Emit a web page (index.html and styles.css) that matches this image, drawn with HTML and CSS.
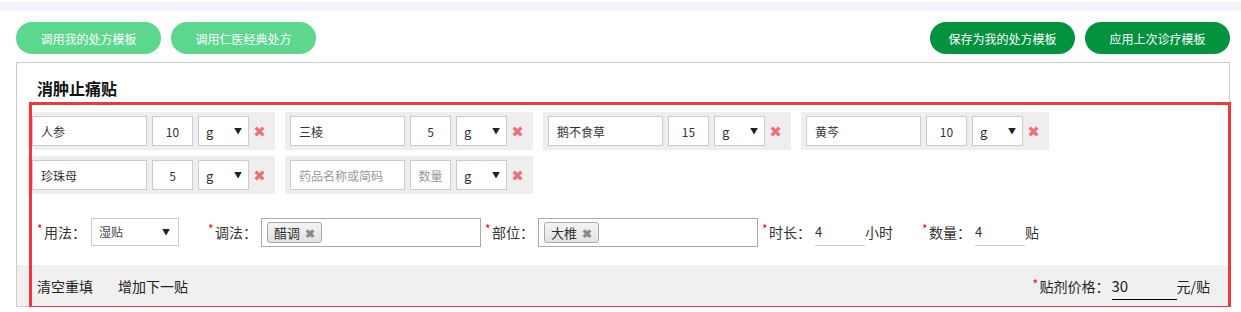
FILE: index.html
```html
<!DOCTYPE html>
<html lang="zh-CN">
<head>
  <meta charset="UTF-8">
  <meta name="viewport" content="width=device-width, initial-scale=1.0">
  <title>外用贴剂处方</title>
  <link rel="stylesheet" href="styles.css">
</head>
<body>
  <div class="top-strip"></div>

  <div class="page">
    <div class="toolbar">
      <div class="btn-group">
        <button class="btn btn-light">调用我的处方模板</button>
        <button class="btn btn-light">调用仁医经典处方</button>
      </div>
      <div class="btn-group">
        <button class="btn btn-dark">保存为我的处方模板</button>
        <button class="btn btn-dark">应用上次诊疗模板</button>
      </div>
    </div>

    <div class="panel">
      <h3 class="panel-title">消肿止痛贴</h3>

      <!-- herb rows -->
      <div class="herb-list">
        <div class="herb">
          <input class="herb-name" type="text" value="人参">
          <input class="herb-qty" type="text" value="10">
          <div class="unit-select">g<span class="caret">&#9660;</span></div>
          <svg class="herb-del" viewBox="0 0 10 10"><path d="M1.5 1.5L8.5 8.5M8.5 1.5L1.5 8.5"/></svg>
        </div>
        <div class="herb">
          <input class="herb-name" type="text" value="三棱">
          <input class="herb-qty" type="text" value="5">
          <div class="unit-select">g<span class="caret">&#9660;</span></div>
          <svg class="herb-del" viewBox="0 0 10 10"><path d="M1.5 1.5L8.5 8.5M8.5 1.5L1.5 8.5"/></svg>
        </div>
        <div class="herb">
          <input class="herb-name" type="text" value="鹅不食草">
          <input class="herb-qty" type="text" value="15">
          <div class="unit-select">g<span class="caret">&#9660;</span></div>
          <svg class="herb-del" viewBox="0 0 10 10"><path d="M1.5 1.5L8.5 8.5M8.5 1.5L1.5 8.5"/></svg>
        </div>
        <div class="herb">
          <input class="herb-name" type="text" value="黄芩">
          <input class="herb-qty" type="text" value="10">
          <div class="unit-select">g<span class="caret">&#9660;</span></div>
          <svg class="herb-del" viewBox="0 0 10 10"><path d="M1.5 1.5L8.5 8.5M8.5 1.5L1.5 8.5"/></svg>
        </div>
        <div class="herb">
          <input class="herb-name" type="text" value="珍珠母">
          <input class="herb-qty" type="text" value="5">
          <div class="unit-select">g<span class="caret">&#9660;</span></div>
          <svg class="herb-del" viewBox="0 0 10 10"><path d="M1.5 1.5L8.5 8.5M8.5 1.5L1.5 8.5"/></svg>
        </div>
        <div class="herb">
          <input class="herb-name" type="text" placeholder="药品名称或简码">
          <input class="herb-qty" type="text" placeholder="数量">
          <div class="unit-select">g<span class="caret">&#9660;</span></div>
          <svg class="herb-del" viewBox="0 0 10 10"><path d="M1.5 1.5L8.5 8.5M8.5 1.5L1.5 8.5"/></svg>
        </div>
      </div>

      <!-- usage -->
      <div class="usage-row">
        <span class="req">*</span><span class="label">用法：</span>
        <div class="usage-select">湿贴<span class="caret">&#9660;</span></div>

        <span class="req gap-wide">*</span><span class="label">调法：</span>
        <div class="tag-box">
          <span class="tag">醋调<span class="tag-x">&#10006;</span></span>
        </div>

        <span class="req gap-narrow">*</span><span class="label">部位：</span>
        <div class="tag-box">
          <span class="tag">大椎<span class="tag-x">&#10006;</span></span>
        </div>

        <span class="req gap-narrow">*</span><span class="label">时长：</span>
        <input class="line-input" type="text" value="4">
        <span class="unit">小时</span>

        <span class="req gap-wide">*</span><span class="label">数量：</span>
        <input class="line-input" type="text" value="4">
        <span class="unit">贴</span>
      </div>

      <div class="panel-footer">
        <a class="footer-link">清空重填</a>
        <a class="footer-link">增加下一贴</a>
        <div class="price">
          <span class="req">*</span><span class="label">贴剂价格：</span>
          <input class="price-input" type="text" value="30">
          <span class="unit">元/贴</span>
        </div>
      </div>

      <div class="highlight"></div>
    </div>
  </div>
</body>
</html>
```

FILE: styles.css
```css
body {
  margin: 0;
  font-family: "Noto Sans CJK SC", "Microsoft YaHei", sans-serif;
  color: #333;
  background: #fff;
}
input {
  font-family: inherit;
  color: #333;
  outline: none;
  box-sizing: border-box;
}
input::placeholder {
  color: #999;
}
.top-strip {
  height: 9px;
  margin-top: 2px;
  background: #f3f4f8;
}
.page {
  padding: 0 11px 0 16px;
}
.toolbar {
  display: flex;
  justify-content: space-between;
  margin-top: 11px;
}
.btn-group {
  display: flex;
  gap: 10px;
}
.btn {
  width: 145px;
  height: 32px;
  border: none;
  border-radius: 16px;
  color: #fff;
  font-family: inherit;
  font-size: 12px;
  padding: 0;
}
.btn-light {
  background: #5bd88e;
}
.btn-dark {
  background: #03933f;
}
.panel {
  position: relative;
  margin-top: 8px;
  border: 1px solid #ccc;
}
.panel-title {
  margin: 0;
  padding: 15px 20px 0;
  font-size: 16px;
  line-height: 20px;
  font-weight: bold;
  color: #111;
}
.herb-list {
  display: flex;
  flex-wrap: wrap;
  margin-top: 14px;
  padding-left: 10px;
}
.herb {
  display: flex;
  align-items: center;
  width: 248px;
  height: 38px;
  box-sizing: border-box;
  padding-left: 5px;
  margin: 0 10px 6px 0;
  background: #eee;
}
.herb-name,
.herb-qty {
  height: 30px;
  border: 1px solid #ccc;
  font-size: 12px;
  background: #fff;
}
.herb-name {
  width: 115px;
  padding: 0 8px;
}
.herb-qty {
  width: 41px;
  margin-left: 5px;
  padding: 0;
  text-align: center;
}
.unit-select {
  position: relative;
  width: 51px;
  height: 30px;
  margin-left: 5px;
  box-sizing: border-box;
  border: 1px solid #ccc;
  background: #fff;
  padding-left: 7px;
  font-size: 13px;
  line-height: 30px;
}
.caret {
  position: absolute;
  right: 6px;
  top: 0;
  font-size: 8px;
  line-height: 27px;
  color: #222;
}
.herb-del {
  width: 11px;
  height: 11px;
  margin-left: 5px;
  stroke: #ee6f77;
  stroke-width: 3;
  fill: none;
}
.usage-row {
  display: flex;
  align-items: center;
  height: 30px;
  margin-top: 17px;
  padding-left: 20px;
  font-size: 14px;
}
.req {
  align-self: flex-start;
  width: 7px;
  margin-top: 6px;
  font-size: 12px;
  line-height: 12px;
  color: #f00;
}
.gap-wide {
  margin-left: 29px;
}
.gap-narrow {
  margin-left: 4px;
}
.label {
  line-height: 20px;
}
.usage-select {
  position: relative;
  width: 88px;
  height: 28px;
  margin-left: 5px;
  box-sizing: border-box;
  border: 1px solid #ccc;
  padding-left: 7px;
  font-size: 12px;
  line-height: 26px;
  color: #444;
}
.usage-select .caret {
  right: 8px;
  line-height: 25px;
}
.tag-box {
  display: flex;
  align-items: center;
  width: 220px;
  height: 29px;
  margin-left: 4px;
  box-sizing: border-box;
  border: 1px solid #aaa;
  padding-left: 5px;
}
.tag {
  display: flex;
  align-items: center;
  height: 21px;
  box-sizing: border-box;
  padding: 0 6px;
  border: 1px solid #aaa;
  border-radius: 3px;
  background: linear-gradient(#f4f4f4, #e2e2e2);
  font-size: 13px;
  color: #333;
}
.tag-x {
  margin-left: 5px;
  font-size: 12px;
  font-weight: bold;
  color: #888;
}
.line-input {
  width: 50px;
  height: 28px;
  margin-left: 4px;
  border: none;
  border-bottom: 1px solid #ccc;
  padding: 0;
  font-size: 13px;
}
.unit {
  line-height: 20px;
}
.panel-footer {
  display: flex;
  align-items: center;
  height: 41px;
  margin-top: 18px;
  padding: 0 19px 0 20px;
  background: #f0f0f0;
  font-size: 14px;
}
.footer-link {
  margin-right: 25px;
  color: #222;
  cursor: pointer;
}
.price {
  display: flex;
  align-items: center;
  height: 30px;
  margin-left: auto;
  color: #222;
}
.price .req {
  margin-top: 7px;
}
.price-input {
  width: 65px;
  height: 28px;
  margin-left: 2px;
  border: none;
  border-bottom: 1px solid #000;
  background: transparent;
  padding: 0;
  font-size: 15px;
  color: #222;
}
.highlight {
  position: absolute;
  left: 12px;
  top: 39px;
  width: 1202px;
  height: 207px;
  box-sizing: border-box;
  border: 3px solid #f3363c;
  pointer-events: none;
}
```
